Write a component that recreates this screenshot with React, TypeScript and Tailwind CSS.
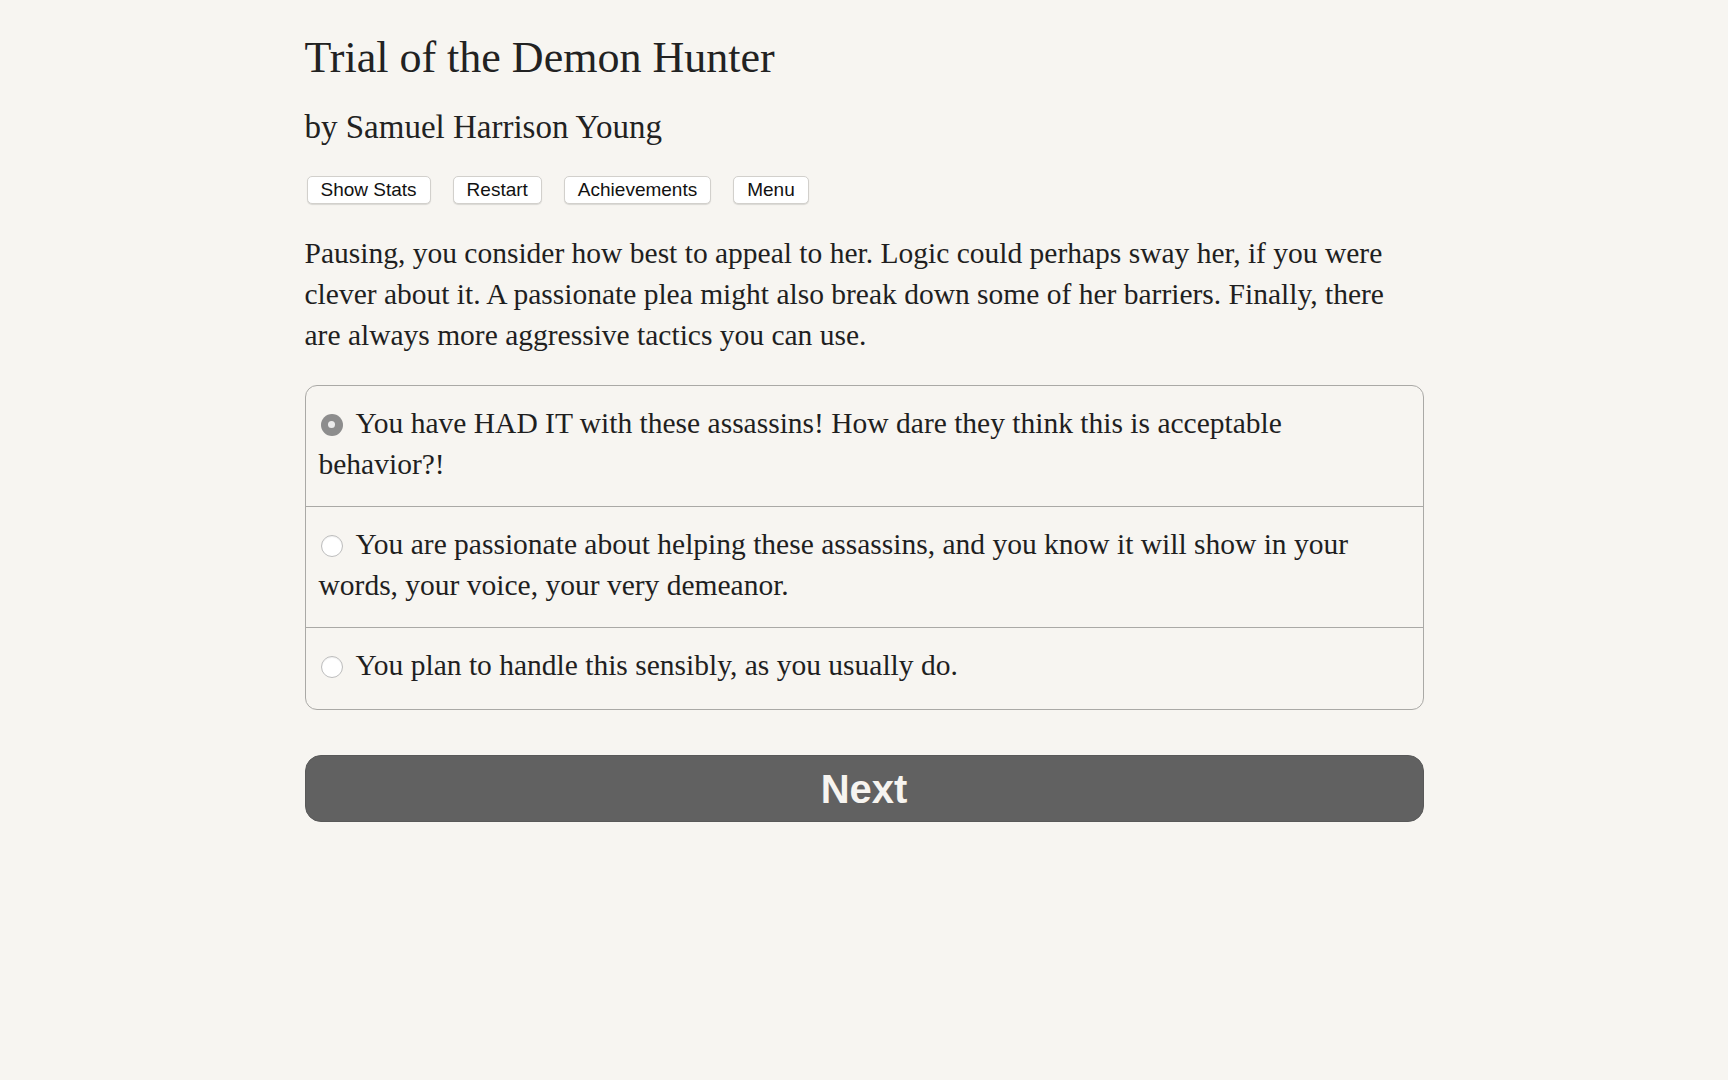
import React from 'react';

const serif = { fontFamily: '"Liberation Serif", "Times New Roman", serif' };

const choices = [
  { text: 'You have HAD IT with these assassins! How dare they think this is acceptable behavior?!', picked: true },
  { text: 'You are passionate about helping these assassins, and you know it will show in your words, your voice, your very demeanor.', picked: false },
  { text: 'You plan to handle this sensibly, as you usually do.', picked: false },
];

function Radio({ picked }: { picked: boolean }) {
  if (picked) {
    return (
      <span className="relative -top-[2px] ml-[2px] mr-[13px] inline-flex h-[22px] w-[22px] items-center justify-center rounded-full bg-[#8d8d8d] align-middle">
        <span className="h-[7px] w-[7px] rounded-full bg-[#ececec]" />
      </span>
    );
  }
  return (
    <span className="relative -top-[2px] ml-[2px] mr-[13px] inline-block h-[22px] w-[22px] rounded-full border border-[#bdbdbd] bg-white align-middle shadow-[inset_0_1px_1px_rgba(0,0,0,0.06)]" />
  );
}

export default function App() {
  return (
    <div className="min-h-screen bg-[#f7f5f1] text-[#1f1f1f]">
      <div className="mx-auto w-[1119px] pt-[32px]" style={serif}>
        <h1 className="text-[44px] leading-[1.2] text-[#222]">Trial of the Demon Hunter</h1>
        <h2 className="mt-[23px] text-[33px] leading-[1.2] text-[#222]">by Samuel Harrison Young</h2>

        <div className="mt-[29px] flex gap-[22px] pl-[2px]" style={{ fontFamily: '"Liberation Sans", Arial, sans-serif' }}>
          {['Show Stats', 'Restart', 'Achievements', 'Menu'].map((b) => (
            <button
              key={b}
              className="h-[28px] rounded-[5px] border border-[#d2d0cc] bg-white px-[13px] text-[19px] leading-[26px] text-[#111] shadow-[0_1px_1px_rgba(0,0,0,0.12)]"
            >
              {b}
            </button>
          ))}
        </div>

        <p className="mt-[29px] text-[29.5px] leading-[41px]">
          Pausing, you consider how best to appeal to her. Logic could perhaps sway her, if you were clever about it. A
          passionate plea might also break down some of her barriers. Finally, there are always more aggressive tactics
          you can use.
        </p>

        <div className="mt-[29px] overflow-hidden rounded-[12px] border border-[#aaa9a6]">
          {choices.map((c, i) => (
            <div
              key={i}
              className={`px-[13px] pt-[17px] text-[29.5px] leading-[41px] ${i > 0 ? 'border-t border-[#aaa9a6]' : ''} ${
                i === choices.length - 1 ? 'pb-[23px]' : 'pb-[21px]'
              }`}
            >
              <Radio picked={c.picked} />
              {c.text}
            </div>
          ))}
        </div>

        <button
          className="mt-[45px] h-[67px] w-full rounded-[16px] border border-[#595959] bg-[#616161] text-[40px] font-bold text-[#f6f4f0]"
          style={{ fontFamily: '"Liberation Sans", Arial, sans-serif' }}
        >
          Next
        </button>
      </div>
    </div>
  );
}
